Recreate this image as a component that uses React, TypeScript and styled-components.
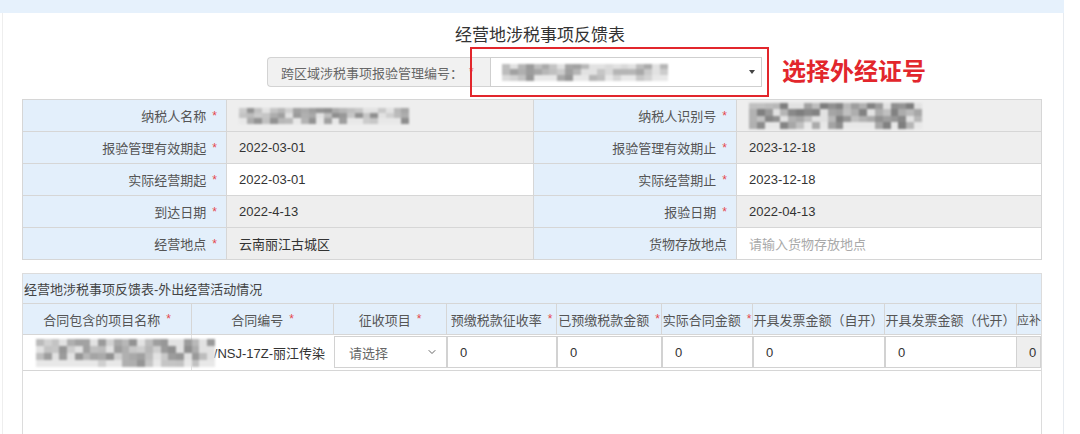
import React from 'react';
import styled, { createGlobalStyle } from 'styled-components';
import { ChevronDown } from 'lucide-react';

const GlobalStyle = createGlobalStyle`
  html, body {
    margin: 0;
    padding: 0;
    background: #ffffff;
  }
  body {
    font-family: "Liberation Sans", "Noto Sans CJK SC", sans-serif;
    font-size: 13px;
    color: #333333;
  }
`;

const Page = styled.div`
  width: 1080px;
  height: 434px;
  overflow: hidden;
  display: flex;
  flex-direction: column;
  background: #ffffff;
`;

const TopBar = styled.div`
  width: 1064px;
  height: 13px;
  flex-shrink: 0;
  background: #e6f1fc;
`;

const Panel = styled.div`
  margin-left: 2px;
  width: 1062px;
  flex: 1;
  min-height: 0;
  display: flex;
  flex-direction: column;
  box-sizing: border-box;
  border-left: 1px solid #eeeeee;
  border-right: 1px solid #e7ebf0;
`;

const Title = styled.div`
  margin-top: 12px;
  padding-left: 14px;
  text-align: center;
  font-size: 17px;
  line-height: 22px;
  color: #333333;
`;

const SelectRow = styled.div`
  display: flex;
  align-items: center;
  margin-top: 10px;
  padding-left: 264px;
`;

const SelectGroup = styled.div`
  position: relative;
  display: flex;
  height: 30px;
`;

const LabelBox = styled.div`
  width: 223px;
  box-sizing: border-box;
  display: flex;
  align-items: center;
  padding-left: 13px;
  background: #f1f1f1;
  border: 1px solid #d3d3d3;
  border-right: none;
  border-radius: 4px 0 0 4px;
  color: #666666;
  white-space: nowrap;
`;

const SelectBox = styled.div`
  width: 272px;
  box-sizing: border-box;
  display: flex;
  align-items: center;
  justify-content: space-between;
  padding: 0 6px 0 11px;
  background: #ffffff;
  border: 1px solid #cfcfcf;
`;

const Caret = styled.span`
  width: 0;
  height: 0;
  border-left: 3.5px solid transparent;
  border-right: 3.5px solid transparent;
  border-top: 4px solid #444444;
`;

const RedFrame = styled.div`
  position: absolute;
  left: 203px;
  top: -10px;
  width: 299px;
  height: 50px;
  box-sizing: border-box;
  border: 2px solid #e2262c;
  pointer-events: none;
`;

const Hint = styled.div`
  margin-left: 20px;
  color: #e2262c;
  font-size: 24px;
  font-weight: 700;
  line-height: 30px;
  white-space: nowrap;
`;

const Star = styled.span`
  color: #e5474d;
  font-size: 12px;
  margin-left: 6px;
`;

const FormGrid = styled.div`
  margin: 12px 0 0 19px;
  width: 1020px;
  box-sizing: border-box;
  display: grid;
  grid-template-columns: 204px 307px 203px 305px;
  border-top: 1px solid #d6d6d6;
  border-left: 1px solid #d6d6d6;
`;

const LabelCell = styled.div`
  height: 32px;
  box-sizing: border-box;
  display: flex;
  align-items: center;
  justify-content: flex-end;
  padding-right: 9px;
  background: #e3effb;
  border-right: 1px solid #d6d6d6;
  border-bottom: 1px solid #d6d6d6;
  color: #555555;
  white-space: nowrap;
`;

const ValueCell = styled.div<{ $white?: boolean; $placeholder?: boolean }>`
  height: 32px;
  box-sizing: border-box;
  display: flex;
  align-items: center;
  padding-left: 12px;
  background: ${p => (p.$white ? '#ffffff' : '#eeeeee')};
  border-right: 1px solid #d6d6d6;
  border-bottom: 1px solid #d6d6d6;
  color: ${p => (p.$placeholder ? '#a9a9a9' : '#333333')};
  white-space: nowrap;
  overflow: visible;
`;

const ActivityTable = styled.div`
  margin: 13px 0 0 19px;
  width: 1020px;
  flex: 1;
  box-sizing: border-box;
  border: 1px solid #dcdcdc;
  border-bottom: none;
`;

const ActivityTitle = styled.div`
  height: 30px;
  box-sizing: border-box;
  display: flex;
  align-items: center;
  padding-left: 1px;
  background: #e3effb;
  border-bottom: 1px solid #d6d6d6;
  color: #444444;
  white-space: nowrap;
`;

const GridRow = styled.div<{ $head?: boolean }>`
  display: grid;
  grid-template-columns: 169px 142px 113px 110px 105px 91px 132px 132px 24px;
  height: ${p => (p.$head ? '31px' : '36px')};
  box-sizing: border-box;
  background: ${p => (p.$head ? '#e3effb' : '#ffffff')};
  border-bottom: 1px solid #d6d6d6;
`;

const HeadCell = styled.div<{ $last?: boolean }>`
  display: flex;
  align-items: center;
  justify-content: ${p => (p.$last ? 'flex-start' : 'center')};
  border-right: ${p => (p.$last ? 'none' : '1px solid #d6d6d6')};
  font-size: ${p => (p.$last ? '12px' : '13px')};
  color: #555555;
  white-space: nowrap;
  overflow: hidden;
`;

const NameCell = styled.div`
  display: flex;
  align-items: center;
  padding-left: 13px;
  border-right: 1px solid #e2e2e2;
  position: relative;
  z-index: 1;
`;

const CodeCell = styled.div`
  display: flex;
  align-items: center;
  justify-content: flex-end;
  padding-right: 9px;
  color: #333333;
  white-space: nowrap;
  overflow: hidden;
`;

const FieldBox = styled.div<{ $readonly?: boolean }>`
  height: 32px;
  margin-top: 1px;
  box-sizing: border-box;
  display: flex;
  align-items: center;
  justify-content: space-between;
  padding: 0 8px 0 12px;
  background: ${p => (p.$readonly ? '#eeeeee' : '#ffffff')};
  border: 1px solid #d2d2d2;
  border-left-width: ${p => (p.$readonly ? '0' : '1px')};
  color: #333333;
  overflow: hidden;
`;

const SelectText = styled.span`
  color: #666666;
  padding-left: 2px;
`;

const MosaicGrid = styled.div<{ $w: number; $h: number; $cols: number }>`
  display: grid;
  grid-template-columns: repeat(${p => p.$cols}, 1fr);
  width: ${p => p.$w}px;
  height: ${p => p.$h}px;
  flex-shrink: 0;
  filter: blur(1.3px);
`;

const makeRandom = (seed: number) => {
  let s = seed;
  return () => {
    s = (s * 9301 + 49297) % 233280;
    return s / 233280;
  };
};

const Mosaic = ({ w, h, seed, dark = 0 }: { w: number; h: number; seed: number; dark?: number }) => {
  const cols = Math.ceil(w / 8);
  const rows = Math.ceil(h / 7);
  const rnd = makeRandom(seed);
  const cells = [];
  for (let i = 0; i < cols * rows; i++) {
    const r = rnd();
    const row = Math.floor(i / cols);
    let v = r < 0.22 ? 226 : Math.round(140 + rnd() * 70 - dark);
    if (row === rows - 1 && r < 0.5) v = 232;
    cells.push(<div key={i} style={{ background: `rgb(${v},${v},${v})` }} />);
  }
  return (
    <MosaicGrid $w={w} $h={h} $cols={cols}>
      {cells}
    </MosaicGrid>
  );
};

const formRows = [
  { l1: '纳税人名称', v1: <Mosaic w={170} h={16} seed={11} />, l2: '纳税人识别号', v2: <Mosaic w={173} h={26} seed={29} dark={15} /> },
  { l1: '报验管理有效期起', v1: '2022-03-01', l2: '报验管理有效期止', v2: '2023-12-18' },
  { l1: '实际经营期起', v1: '2022-03-01', w1: true, l2: '实际经营期止', v2: '2023-12-18', w2: true },
  { l1: '到达日期', v1: '2022-4-13', l2: '报验日期', v2: '2022-04-13' },
  { l1: '经营地点', v1: '云南丽江古城区', l2: '货物存放地点', v2: '请输入货物存放地点', w2: true, p2: true, noStar2: true },
];

const headers = [
  '合同包含的项目名称',
  '合同编号',
  '征收项目',
  '预缴税款征收率',
  '已预缴税款金额',
  '实际合同金额',
  '开具发票金额（自开）',
  '开具发票金额（代开）',
];
const starred = 6;

const App = () => {
  return (
    <Page>
      <GlobalStyle />
      <TopBar />
      <Panel>
        <Title>经营地涉税事项反馈表</Title>
        <SelectRow>
          <SelectGroup>
            <LabelBox>
              跨区域涉税事项报验管理编号：<Star>*</Star>
            </LabelBox>
            <SelectBox>
              <Mosaic w={166} h={17} seed={7} dark={-10} />
              <Caret />
            </SelectBox>
            <RedFrame />
          </SelectGroup>
          <Hint>选择外经证号</Hint>
        </SelectRow>

        <FormGrid>
          {formRows.map(r => (
            <React.Fragment key={r.l1}>
              <LabelCell>
                {r.l1}
                <Star>*</Star>
              </LabelCell>
              <ValueCell $white={r.w1}>{r.v1}</ValueCell>
              <LabelCell>
                {r.l2}
                {!r.noStar2 && <Star>*</Star>}
              </LabelCell>
              <ValueCell $white={r.w2} $placeholder={r.p2}>
                {r.v2}
              </ValueCell>
            </React.Fragment>
          ))}
        </FormGrid>

        <ActivityTable>
          <ActivityTitle>经营地涉税事项反馈表-外出经营活动情况</ActivityTitle>
          <GridRow $head>
            {headers.map((h, i) => (
              <HeadCell key={h}>
                {h}
                {i < starred && <Star>*</Star>}
              </HeadCell>
            ))}
            <HeadCell $last>应补</HeadCell>
          </GridRow>
          <GridRow>
            <NameCell>
              <Mosaic w={179} h={28} seed={43} />
            </NameCell>
            <CodeCell>/NSJ-17Z-丽江传染</CodeCell>
            <FieldBox>
              <SelectText>请选择</SelectText>
              <ChevronDown size={12} color="#666" strokeWidth={2} />
            </FieldBox>
            <FieldBox>0</FieldBox>
            <FieldBox>0</FieldBox>
            <FieldBox>0</FieldBox>
            <FieldBox>0</FieldBox>
            <FieldBox>0</FieldBox>
            <FieldBox $readonly>0</FieldBox>
          </GridRow>
        </ActivityTable>
      </Panel>
    </Page>
  );
};

export default App;
